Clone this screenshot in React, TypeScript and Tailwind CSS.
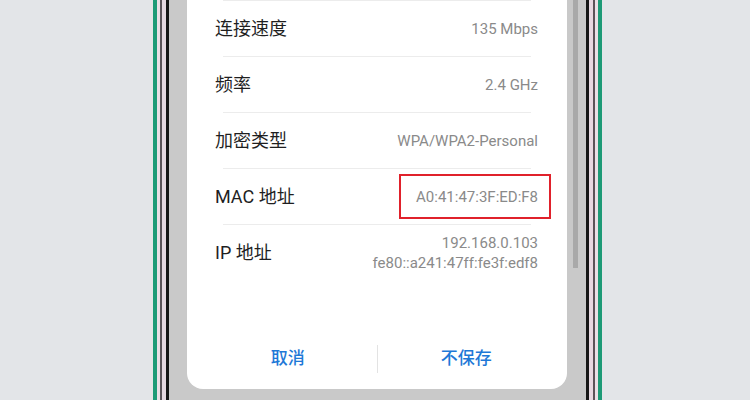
import React from "react";

const rows = [
  { label: "连接速度", value: ["135 Mbps"] },
  { label: "频率", value: ["2.4 GHz"] },
  { label: "加密类型", value: ["WPA/WPA2-Personal"] },
  { label: "MAC 地址", value: ["A0:41:47:3F:ED:F8"], marked: true },
  { label: "IP 地址", value: ["192.168.0.103", "fe80::a241:47ff:fe3f:edf8"] },
];

export default function App() {
  return (
    <div
      className="w-[750px] h-[400px] overflow-hidden bg-[#e3e5e8] flex pl-[153px]"
      style={{ fontFamily: "Roboto, 'Noto Sans CJK SC', sans-serif" }}
    >
      <div className="h-full border-x-[4px] border-[#1d9a76]">
        <div className="h-full border-x-[3px] border-[#e9dfe5]">
          <div className="h-full border-x-[2px] border-[#5a5358]">
            <div className="h-full border-x-[4px] border-[#e5d8e0]">
              <div className="h-full border-x-[3px] border-[#161616]">
                <div className="h-full bg-[#c9c9c9] pl-[18px] pr-[19px] flex relative">
                  <div className="w-[380px] h-[389px] bg-white rounded-b-[16px] flex flex-col">
                    {rows.map((row) => (
                      <React.Fragment key={row.label}>
                        <div className="h-px bg-[#ececec] mx-[36px]" />
                        <div className="h-[55px] flex items-center justify-between pl-[28px] pr-[29px]">
                          <span className="text-[18px] text-[#1f1f1f]">{row.label}</span>
                          <div className="relative flex flex-col items-end text-[15px] leading-[20px] text-[#8a8a8a]">
                            {row.value.map((v) => (
                              <span key={v}>{v}</span>
                            ))}
                            {row.marked && (
                              <div className="absolute -left-[17px] -right-[13px] -top-[13px] -bottom-[12px] border-2 border-[#e0212b]" />
                            )}
                          </div>
                        </div>
                      </React.Fragment>
                    ))}
                    <div className="flex-1" />
                    <div className="h-[48px] mb-[6px] px-[12px] flex items-center">
                      <button className="flex-1 text-[17px] font-medium text-[#1e78d7]">取消</button>
                      <div className="w-px h-[28px] bg-[#e3e3e3]" />
                      <button className="flex-1 text-[17px] font-medium text-[#1e78d7]">不保存</button>
                    </div>
                  </div>
                  <div className="absolute right-[8px] top-0 w-[5px] h-[268px] bg-[#a9a9a9]" />
                </div>
              </div>
            </div>
          </div>
        </div>
      </div>
    </div>
  );
}
